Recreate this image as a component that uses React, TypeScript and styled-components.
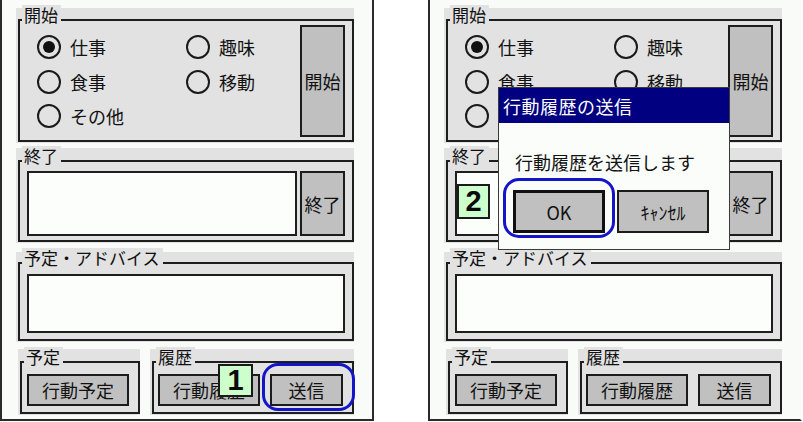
import { createGlobalStyle, styled } from "styled-components";

const GlobalStyle = createGlobalStyle`
  html, body {
    margin: 0;
    padding: 0;
    background: #ffffff;
  }
  body {
    font-family: "Noto Sans CJK JP", "Noto Sans", sans-serif;
    color: #111111;
  }
`;

const Page = styled.div`
  display: flex;
  gap: 54px;
  width: 803px;
  height: 422px;
  overflow: hidden;
`;

const Screen = styled.div<{ $cut?: boolean }>`
  position: relative;
  flex: none;
  width: 374px;
  height: 421px;
  box-sizing: border-box;
  background: #f8fbf8;
  border: 2px solid #2a2a2a;
  border-top: none;
  border-right-color: ${(p) => (p.$cut ? "transparent" : "#2a2a2a")};
  padding: 8px 18px 0 14px;
  display: flex;
  flex-direction: column;
`;

const Group = styled.div<{ $mt?: number; $pt: number; $w?: number }>`
  background: #e2e2e2;
  margin-top: ${(p) => p.$mt ?? 0}px;
  padding: ${(p) => p.$pt}px 0 1px 2px;
  ${(p) => (p.$w ? `width: ${p.$w}px; flex: none; box-sizing: border-box;` : "")}
`;

const Box = styled.div<{ $h: number }>`
  position: relative;
  box-sizing: border-box;
  height: ${(p) => p.$h}px;
  border: 2px solid #1e1e1e;
`;

const Legend = styled.span`
  position: absolute;
  left: 2px;
  top: -16px;
  padding: 0 3px 0 2px;
  background: #e2e2e2;
  font-size: 17px;
  line-height: 20px;
  white-space: nowrap;
`;

const Body = styled.div<{ $pad: string; $gap?: number }>`
  display: flex;
  gap: ${(p) => p.$gap ?? 0}px;
  height: 100%;
  box-sizing: border-box;
  padding: ${(p) => p.$pad};
`;

const RadioGrid = styled.div`
  flex: 1;
  display: grid;
  grid-template-columns: 149px 1fr;
  grid-auto-rows: 34.5px;
  padding-top: 5px;
`;

const Radio = styled.label`
  display: flex;
  align-items: center;
  gap: 9px;
  font-size: 18px;
  line-height: 24px;
  white-space: nowrap;
`;

const Circle = styled.span<{ $on?: boolean }>`
  width: 24px;
  height: 24px;
  flex: none;
  box-sizing: border-box;
  border-radius: 50%;
  border: 2px solid #1a1a1a;
  display: flex;
  align-items: center;
  justify-content: center;
  &::after {
    content: "";
    display: ${(p) => (p.$on ? "block" : "none")};
    width: 12px;
    height: 12px;
    border-radius: 50%;
    background: #111111;
  }
`;

const Btn = styled.button<{ $w: number; $h?: number; $thick?: boolean }>`
  flex: none;
  width: ${(p) => p.$w}px;
  height: ${(p) => (p.$h ? `${p.$h}px` : "auto")};
  box-sizing: border-box;
  margin: 0;
  padding: 0;
  background: #c0c0c0;
  border: ${(p) => (p.$thick ? "3px solid #111111" : "2px solid #1c1c1c")};
  color: #111111;
  font-family: "Noto Sans CJK JP", "Noto Sans", sans-serif;
  font-size: 18px;
  line-height: 22px;
  white-space: nowrap;
`;

const TextBox = styled.div`
  flex: 1;
  box-sizing: border-box;
  background: #fbfefb;
  border: 2px solid #1e1e1e;
`;

const BottomRow = styled.div`
  display: flex;
  gap: 10px;
  margin-top: 7px;
  padding-left: 2px;
`;

const Callout = styled.div<{ $x: number; $y: number; $w: number; $h: number }>`
  position: absolute;
  left: ${(p) => p.$x}px;
  top: ${(p) => p.$y}px;
  width: ${(p) => p.$w}px;
  height: ${(p) => p.$h}px;
  box-sizing: border-box;
  background: #ccffcc;
  border: 2px solid #1a1a1a;
  display: flex;
  align-items: center;
  justify-content: center;
  font-family: "Liberation Sans", Arial, sans-serif;
  font-weight: 700;
  font-size: 29px;
  line-height: 1;
  color: #0a0a0a;
`;

const Ring = styled.div<{ $x: number; $y: number; $w: number; $h: number }>`
  position: absolute;
  left: ${(p) => p.$x}px;
  top: ${(p) => p.$y}px;
  width: ${(p) => p.$w}px;
  height: ${(p) => p.$h}px;
  box-sizing: border-box;
  border: 3px solid #1414c8;
  border-radius: 16px;
  pointer-events: none;
`;

const Dialog = styled.div`
  position: absolute;
  left: 68px;
  top: 87px;
  width: 232px;
  height: 163px;
  box-sizing: border-box;
  border: 1px solid #3a3a3a;
  background: #fbfdfb;
  display: flex;
  flex-direction: column;
`;

const DialogTitle = styled.div`
  height: 35px;
  flex: none;
  background: #000080;
  color: #ffffff;
  font-size: 18px;
  letter-spacing: 0.5px;
  padding-left: 4px;
  display: flex;
  align-items: center;
`;

const DialogText = styled.div`
  padding: 27px 0 0 16px;
  font-size: 18px;
  line-height: 24px;
  white-space: nowrap;
`;

const DialogButtons = styled.div`
  display: flex;
  gap: 12px;
  padding: 16px 0 0 14px;
`;

const radios = [
  { label: "仕事", on: true },
  { label: "趣味" },
  { label: "食事" },
  { label: "移動" },
  { label: "その他" },
];

function Form() {
  return (
    <>
      <Group $pt={11}>
        <Box $h={123}>
          <Legend>開始</Legend>
          <Body $pad="4px 7px 3px 17px">
            <RadioGrid>
              {radios.map((r) => (
                <Radio key={r.label}>
                  <Circle $on={r.on} />
                  {r.label}
                </Radio>
              ))}
            </RadioGrid>
            <Btn $w={45}>開始</Btn>
          </Body>
        </Box>
      </Group>

      <Group $mt={5} $pt={12}>
        <Box $h={82}>
          <Legend>終了</Legend>
          <Body $pad="9px 7px 4px 7px" $gap={3}>
            <TextBox />
            <Btn $w={45}>終了</Btn>
          </Body>
        </Box>
      </Group>

      <Group $mt={9} $pt={10}>
        <Box $h={79}>
          <Legend>予定・アドバイス</Legend>
          <Body $pad="10px 7px 6px 7px">
            <TextBox />
          </Body>
        </Box>
      </Group>

      <BottomRow>
        <Group $pt={12} $w={122}>
          <Box $h={53}>
            <Legend>予定</Legend>
            <Body $pad="11px 0 6px 5px">
              <Btn $w={102}>行動予定</Btn>
            </Body>
          </Box>
        </Group>
        <Group $pt={12} $w={204}>
          <Box $h={53}>
            <Legend>履歴</Legend>
            <Body $pad="11px 0 6px 4px" $gap={10}>
              <Btn $w={102}>行動履歴</Btn>
              <Btn $w={73}>送信</Btn>
            </Body>
          </Box>
        </Group>
      </BottomRow>
    </>
  );
}

export default function App() {
  return (
    <>
      <GlobalStyle />
      <Page>
        <Screen>
          <Form />
          <Callout $x={216} $y={364} $w={35} $h={33}>1</Callout>
          <Ring $x={260} $y={363} $w={93} $h={48} />
        </Screen>

        <Screen $cut>
          <Form />
          <Callout $x={27} $y={184} $w={33} $h={35}>2</Callout>
          <Dialog>
            <DialogTitle>行動履歴の送信</DialogTitle>
            <DialogText>行動履歴を送信します</DialogText>
            <DialogButtons>
              <Btn $w={92} $h={43} $thick>OK</Btn>
              <Btn $w={92} $h={43}>ｷｬﾝｾﾙ</Btn>
            </DialogButtons>
          </Dialog>
          <Ring $x={73} $y={178} $w={112} $h={60} />
        </Screen>
      </Page>
    </>
  );
}
